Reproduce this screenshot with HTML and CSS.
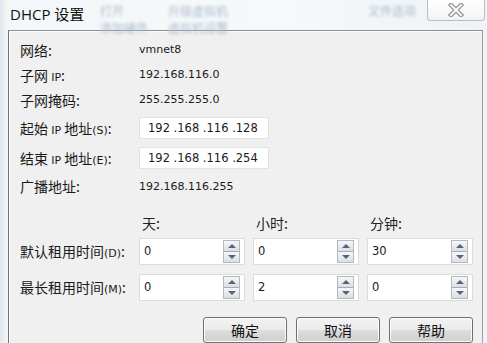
FILE: index.html
```html
<!DOCTYPE html>
<html lang="zh-CN">
<head>
    <meta charset="UTF-8">
    <title>DHCP 设置</title>
    <link rel="stylesheet" href="styles.css">
</head>
<body>
    <div class="window">
        <div class="titlebar">
            <!-- texto borroso de la ventana de atras -->
            <div class="ghost">
                <span style="left: 92px; top: 2px;">打开</span>
                <span style="left: 160px; top: 2px;">升级虚拟机</span>
                <span style="left: 360px; top: 2px;">文件选项</span>
                <span style="left: 92px; top: 19px;">添加硬件</span>
                <span style="left: 160px; top: 19px;">虚拟机设置</span>
            </div>
            <span class="title">DHCP 设置</span>
            <button class="close" aria-label="关闭">
                <svg width="20" height="14" viewBox="0 0 20 14">
                    <path d="M5 2 L15 12 M15 2 L5 12" stroke="#8c8c8c" stroke-width="4.4" stroke-linecap="square" fill="none"/>
                    <path d="M5 2 L15 12 M15 2 L5 12" stroke="#fafafa" stroke-width="2.2" stroke-linecap="square" fill="none"/>
                </svg>
            </button>
        </div>

        <div class="client">
            <div class="info">
                <span class="label">网络:</span>
                <span class="value">vmnet8</span>

                <span class="label">子网 <span class="en">IP</span>:</span>
                <span class="value">192.168.116.0</span>

                <span class="label">子网掩码:</span>
                <span class="value">255.255.255.0</span>

                <span class="label">起始 <span class="en">IP</span> 地址<span class="en">(S)</span>:</span>
                <div class="field">192 .168 .116 .128</div>

                <span class="label">结束 <span class="en">IP</span> 地址<span class="en">(E)</span>:</span>
                <div class="field">192 .168 .116 .254</div>

                <span class="label">广播地址:</span>
                <span class="value">192.168.116.255</span>
            </div>

            <div class="lease">
                <span></span>
                <span class="head">天:</span>
                <span class="head">小时:</span>
                <span class="head">分钟:</span>

                <span class="label">默认租用时间<span class="en">(D)</span>:</span>
                <div class="spin"><span class="num">0</span><span class="arrows"><i class="up"></i><i class="down"></i></span></div>
                <div class="spin"><span class="num">0</span><span class="arrows"><i class="up"></i><i class="down"></i></span></div>
                <div class="spin"><span class="num">30</span><span class="arrows"><i class="up"></i><i class="down"></i></span></div>

                <span class="label">最长租用时间<span class="en">(M)</span>:</span>
                <div class="spin"><span class="num">0</span><span class="arrows"><i class="up"></i><i class="down"></i></span></div>
                <div class="spin"><span class="num">2</span><span class="arrows"><i class="up"></i><i class="down"></i></span></div>
                <div class="spin"><span class="num">0</span><span class="arrows"><i class="up"></i><i class="down"></i></span></div>
            </div>

            <div class="actions">
                <button class="btn">确定</button>
                <button class="btn">取消</button>
                <button class="btn">帮助</button>
            </div>
        </div>
    </div>
</body>
</html>
```

FILE: styles.css
```css
body {
    margin: 0;
    width: 487px;
    height: 343px;
    overflow: hidden;
    background-color: #eef2f5;
    font-family: "Noto Sans CJK SC", sans-serif;
    color: #1a1a1a;
}

.window {
    height: 343px;
    padding-left: 8px;
    padding-right: 4px;
    background: linear-gradient(90deg, #dfe8ee 0, #f4f7f9 8px, #f6f8fa 60%, #eef3f6 100%);
    display: flex;
    flex-direction: column;
}

/* barra de titulo */
.titlebar {
    position: relative;
    height: 31px;
    display: flex;
    align-items: flex-start;
    justify-content: space-between;
}

.ghost {
    position: absolute;
    top: 0;
    left: 0;
    right: 0;
    bottom: 0;
}

.ghost span {
    position: absolute;
    font-size: 12px;
    color: #aebccb;
    filter: blur(1.4px);
    white-space: nowrap;
}

.title {
    position: relative;
    margin-left: 2px;
    margin-top: 3px;
    font-family: "Open Sans", "Noto Sans CJK SC", sans-serif;
    font-size: 15px;
    color: #111;
}

.close {
    position: relative;
    width: 58px;
    height: 21px;
    margin-right: -2px;
    padding: 0;
    border: 1px solid #b9bec4;
    border-top: none;
    border-radius: 0 0 4px 4px;
    background: linear-gradient(#ffffff, #f1f3f5);
    display: flex;
    align-items: center;
    justify-content: center;
}

/* area cliente */
.client {
    flex: 1;
    background-color: #f0f0f0;
    border-left: 1px solid #6e7377;
    border-top: 1px solid #8c9196;
    border-right: 1px solid #9aa0a5;
    box-shadow: inset 1px 1px 0 #fbfbfb;
    padding: 6px 9px 0 11px;
}

.label {
    font-size: 14px;
    white-space: nowrap;
}

.en {
    font-family: "DejaVu Sans", sans-serif;
    font-size: 11px;
}

.info {
    display: grid;
    grid-template-columns: 119px 130px;
    grid-template-rows: 25px 25px 25px 31px 29px 28px;
    align-items: center;
}

.value {
    font-family: "DejaVu Sans", sans-serif;
    font-size: 11px;
}

.field {
    height: 20px;
    line-height: 20px;
    border: 1px solid #e2e3e5;
    background-color: #fff;
    padding-left: 8px;
    font-family: "DejaVu Sans", sans-serif;
    font-size: 11.5px;
    white-space: pre;
}

/* tiempos de concesion */
.lease {
    margin-top: 12px;
    display: grid;
    grid-template-columns: 111px 106px 106px 106px;
    grid-template-rows: 21px 36px 36px;
    column-gap: 8px;
    align-items: center;
}

.head {
    font-size: 14px;
    padding-left: 3px;
    color: #222;
}

.spin {
    height: 25px;
    border: 1px solid #dadbdd;
    background-color: #fff;
    display: flex;
    align-items: center;
    justify-content: space-between;
}

.num {
    padding-left: 4px;
    font-family: "DejaVu Sans", sans-serif;
    font-size: 11.5px;
}

.arrows {
    width: 15px;
    height: 21px;
    margin-right: 4px;
    border: 1px solid #b5b8bd;
    display: flex;
    flex-direction: column;
}

.arrows i {
    flex: 1;
    display: flex;
    align-items: center;
    justify-content: center;
    background: linear-gradient(#f7f7f8, #dcdee2);
}

.arrows i.up {
    border-bottom: 1px solid #a7abb2;
}

.arrows i::after {
    content: "";
    border-left: 4px solid transparent;
    border-right: 4px solid transparent;
}

.arrows i.up::after {
    border-bottom: 4px solid #506485;
}

.arrows i.down::after {
    border-top: 4px solid #506485;
}

/* botones */
.actions {
    margin-top: 12px;
    display: flex;
    justify-content: flex-end;
    gap: 9px;
}

.btn {
    width: 84px;
    height: 26px;
    padding: 0;
    border: 1px solid #707070;
    border-radius: 3px;
    background: linear-gradient(#f3f3f3 0, #ebebeb 48%, #dddddd 52%, #cfcfcf 100%);
    box-shadow: inset 0 0 0 1px #fcfcfc;
    font-family: "Noto Sans CJK SC", sans-serif;
    font-size: 14px;
    color: #111;
}
```
